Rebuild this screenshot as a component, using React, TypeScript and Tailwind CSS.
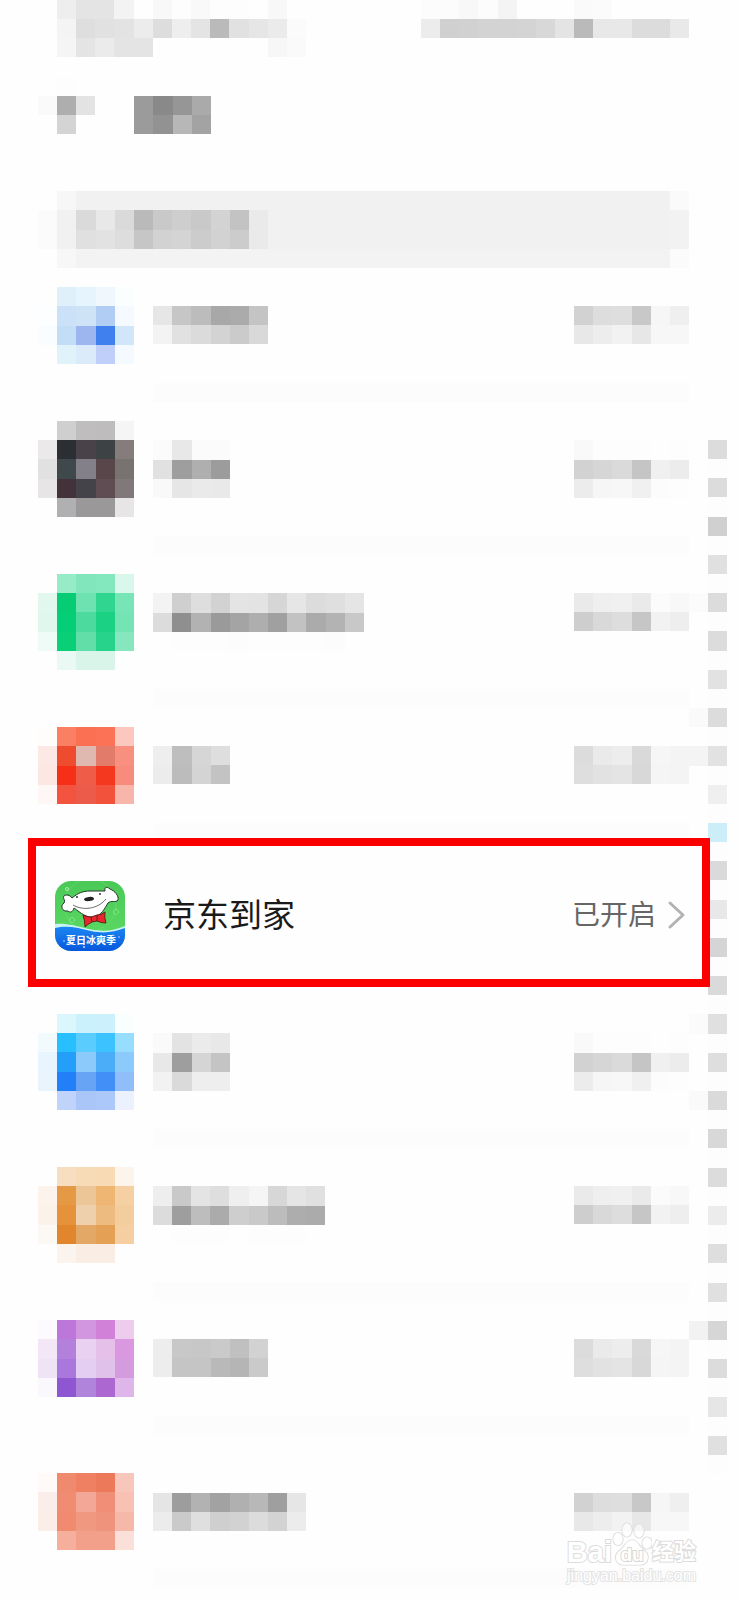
interface AppRow {
  icon: string[];
  label: string[];
  status: string[];
}

// Cell codes: "." is empty, two digits are a grey level, six digits are a full colour.
function toFill(code: string) {
  return code.length === 2 ? `#${code}${code}${code}` : `#${code}`;
}

const cellsToPx = (n: number) => Math.round((n * 134) / 7);

function Mosaic({ rows }: { rows: string[] }) {
  const grid = rows.map((r) => r.split(' '));
  const cols = Math.max(...grid.map((r) => r.length));

  return (
    <svg
      className="block shrink-0"
      width={cellsToPx(cols)}
      height={cellsToPx(rows.length)}
      viewBox={`0 0 ${cols} ${rows.length}`}
      preserveAspectRatio="none"
      shapeRendering="crispEdges"
      aria-hidden="true"
    >
      {grid.map((row, y) =>
        row.map((code, x) =>
          code === '.' ? null : <rect key={`${x}-${y}`} x={x} y={y} width={1} height={1} fill={toFill(code)} />
        )
      )}
    </svg>
  );
}

// The status text falls on the pixel grid in four different ways.
const STATUS_A = ['.', 'd2 dd de c8 f6 ef', 'e8 ed f2 e7 f7 f7'];
const STATUS_B = ['.', 'f9 fd fd fd . fd', 'd2 d6 da c5 f0 ec', 'ec f6 f7 f0 fc fd'];
const STATUS_C = ['.', 'ea ef f0 ea fb f8', 'ce d9 dd c6 f2 ee'];
const STATUS_D = ['.', 'dc ea ed d9 f6 f4', 'de e2 e4 d8 f5 f4'];

const ROWS_ABOVE: AppRow[] = [
  {
    icon: [
      '. dff0fa e6f4fd f0f8fe fbfeff',
      'fcfeff cae1f7 cfe3f7 b1cdf4 f4faff',
      'fafdff c4ddf6 9eb6f0 4080ee d2e6fa',
      '. e0f3fb dbebfa c0cff9 f4faff',
    ],
    label: ['.', 'e6 c6 bc a8 ab c4', 'f3 e1 db d3 cb d9'],
    status: STATUS_A,
  },
  {
    icon: [
      '. d0cfd0 bfbdbe bebcbd f5f5f5',
      'ebe9ea 2b2f33 494349 3d4344 857c7c',
      'e2e1e2 3f484a 83808a 58464b 787371',
      'e7e5e6 43323a 45434a 5f4d53 817979',
      '. b0afb1 9b9899 9b9899 e7e5e6',
    ],
    label: ['.', 'fb e8 fb fb', 'e1 9e af 9c', 'f9 e6 ea e9'],
    status: STATUS_B,
  },
  {
    icon: [
      '. 97ebc6 81e6bb 83e8be daf7eb',
      'e2f8ef 06cd74 6fe2b1 30d68f 78e5b6',
      'e0f7ed 04ce76 4cda9f 1bd284 75e4b4',
      'effbf7 09cf77 62dfa9 27d38a 86e7bf',
      '. ebf9f4 d9f5ea d9f5ea fdfefe',
    ],
    label: ['.', 'f3 cf de d2 e4 e3 d6 e6 dc df e5', 'dc 8f b2 9a a4 ae a0 c2 ab b3 c8', 'fe fd fd fd fc fd fd fd fd fc'],
    status: STATUS_C,
  },
  {
    icon: [
      'fffdfc fb7f63 fb6f53 fb7257 fcc7be',
      'fce8e4 ef4c2f dfb8b0 e37b6b f98f7f',
      'fce7e2 f53016 ef5d48 f3381f f88c7c',
      'fef7f5 f2543f ec5b4a f2523c f8b5aa',
    ],
    label: ['.', 'ee be d6 de', 'ec bc d4 c3'],
    status: STATUS_D,
  },
];

const ROWS_BELOW: AppRow[] = [
  {
    icon: [
      '. dcf6fd cbf1fc ccf1fc f9fefe',
      'f2fafe 28bffe 5acdfe 3cc3ff 97ddfe',
      'e9f5fe 249ff9 8bcafa 4bacf8 8dcafc',
      'eaf4fd 217ff7 68a4f6 428ff7 92bdfb',
      '. bfd3fb aac6f9 acc7f9 ebf2fe',
    ],
    label: ['.', 'fa e3 eb e8', 'e8 9e d5 c4', 'f2 da ee ee'],
    status: STATUS_B,
  },
  {
    icon: [
      '. f7dec0 f7dbb6 f8dab4 fdf5ec',
      'fbf3ec e59945 edc697 efb673 f4d0a2',
      'fbf2ea e5923b efd0ac edbb80 f4cd9e',
      'fcf9f4 e2862e e3a766 e4a055 f5cfa2',
      '. fbf4ee faeee4 faeee4 fefefe',
    ],
    label: ['.', 'ee c9 e4 de ef f5 d7 e5 e0', 'dc 9e bd ab ce c9 bc ad ab fe', '. fd fd fd fe fd fd fd'],
    status: STATUS_C,
  },
  {
    icon: [
      'fdfaff bd76da d196df d182d8 eeccee',
      'f2e6f7 b380dc e9d2f1 e5c0e9 d998df',
      'eee4f6 aa77dc e4cef1 dfc1ea d59bdf',
      'faf8fd 8f56d2 b084db ac67d1 deb6e9',
    ],
    label: ['.', 'ed c8 c7 ca c0 d2', 'ed c5 c5 b9 b5 ca'],
    status: STATUS_D,
  },
  {
    icon: [
      '. . . . .',
      'fffaf8 f08a6f ef8062 ed795b f8c7bb',
      'fbede9 f08c72 f3a897 f08e77 f8c1b3',
      'fbeee9 f08b70 f19880 f0937c f6b8a9',
      '. f6ae9d f3a08a f3a08a fbe0da',
    ],
    label: ['.', '.', 'e5 9d b2 a2 b0 b8 9f e6', 'ec ca df cf d2 dc d3 ec'],
    status: ['.', ...STATUS_A],
  },
];

// Letter index on the right: one lit cell for every other row.
const INDEX_LETTERS = [
  '. dc', '. dc', '. d0', '. e0', 'fb dc', '. dc', '. e2', 'fa dc', 'f4 e2', '. ef', '. cbeef9', '. da', '. e8', '. d5',
  '. da', 'fb e0', '. de', 'fa da', '. d8', '. dc', '. ec', '. de', '. e0', 'f2 d6', '. dc', '. e6', '. e0',
];
const INDEX_ROWS = INDEX_LETTERS.flatMap((row) => [row, '. fd']);

function PixelRow({ row }: { row: AppRow }) {
  return (
    <li>
      <button type="button" aria-label="应用" className="flex w-full items-start pt-[19px] pb-[19px] pl-[38px]">
        <Mosaic rows={row.icon} />
        <span className="ml-[19px] flex flex-1 items-start justify-between">
          <Mosaic rows={row.label} />
          <Mosaic rows={row.status} />
        </span>
      </button>
      <div className="ml-[153px] h-[19px] bg-[#fcfcfc]" />
    </li>
  );
}

function JdIcon() {
  return (
    <svg className="size-[70px] shrink-0" viewBox="0 0 70 70" aria-hidden="true">
      <defs>
        <clipPath id="jd-clip">
          <rect width="70" height="70" rx="16" />
        </clipPath>
        <linearGradient id="jd-green" x1="0" y1="0" x2="0" y2="1">
          <stop offset="0" stopColor="#4bc957" />
          <stop offset="1" stopColor="#5fdc66" />
        </linearGradient>
        <linearGradient id="jd-blue" x1="0" y1="0" x2="0" y2="1">
          <stop offset="0" stopColor="#1c86f2" />
          <stop offset="1" stopColor="#0757dc" />
        </linearGradient>
      </defs>
      <g clipPath="url(#jd-clip)">
        <rect width="70" height="70" fill="url(#jd-green)" />
        <circle cx="35" cy="24" r="26" fill="none" stroke="#7be67f" strokeWidth="1" opacity="0.4" />
        <g fill="none" stroke="#a9f0a9" strokeWidth="1">
          <circle cx="12" cy="8" r="1.5" />
          <circle cx="17" cy="39" r="2.5" strokeDasharray="1 1" />
          <circle cx="61" cy="31" r="2.5" strokeDasharray="1 1" />
        </g>
        <path d="M0 43 C12 42 20 45 34 48 S58 50 70 45 V70 H0Z" fill="#c9f3f3" />
        <path d="M0 47 C13 44 23 47 36 50 S59 51 70 47 V70 H0Z" fill="url(#jd-blue)" />
        {/* dog head with both ears */}
        <path
          d="M17 17 C23 12 28 10 35 10 C41 10 45 10 50 10 C49 6 52 5 55 8 C60 10 64 15 63 19 C61 22 56 19 53 22 C50 27 46 35 39 36 C31 37 26 32 19 27 C18 31 15 32 13 30 C7 31 5 25 9 22 C11 19 7 17 9 15 C11 13 15 14 17 17Z"
          fill="#fff"
          stroke="#26352a"
          strokeWidth="1"
        />
        <path d="M18 24 C28 30 43 28 51 18" fill="none" stroke="#444" strokeWidth="0.8" />
        <ellipse cx="34" cy="18" rx="5" ry="2" fill="#222" transform="rotate(-7 34 18)" />
        <circle cx="22" cy="16" r="0.9" fill="#222" />
        <circle cx="45" cy="13" r="0.9" fill="#222" />
        {/* bow tie */}
        <path
          d="M28 34 Q32 36 36 36 L42 34 Q46 34 50 31 Q49 36 51 42 Q46 42 42 40 L37 41 Q33 43 30 46 Q30 40 28 34Z"
          fill="#e8262b"
          stroke="#5a1a18"
          strokeWidth="0.9"
        />
        <path d="M36 36 L37 41 M42 34 V40" stroke="#5a1a18" strokeWidth="0.9" />
        <text
          x="36"
          y="63"
          textAnchor="middle"
          fontSize="10"
          fontWeight="700"
          fill="#fff"
          fontFamily='"Noto Sans CJK SC", sans-serif'
        >
          夏日冰爽季
        </text>
        <g fill="#bfe2ff">
          <circle cx="9" cy="60" r="0.8" />
          <circle cx="64" cy="56" r="0.8" />
          <circle cx="29" cy="66" r="1" />
        </g>
      </g>
    </svg>
  );
}

function HighlightedRow() {
  return (
    <li className="relative z-10 -mt-1 -mr-[21px] mb-2 ml-7">
      <button
        type="button"
        className="flex w-full items-center border-8 border-[#fc0000] bg-[#fefefe] pt-[35px] pr-4 pb-7 pl-[19px]"
      >
        <JdIcon />
        <span className="ml-[38px] text-[33px] leading-10 text-[#1a1a1a]">京东到家</span>
        <span className="ml-auto text-[28px] leading-10 text-[#666]">已开启</span>
        <svg
          className="ml-[10px] h-8 w-5"
          viewBox="0 0 20 32"
          fill="none"
          stroke="#b2b2b2"
          strokeWidth="3"
          strokeLinecap="round"
          strokeLinejoin="round"
          aria-hidden="true"
        >
          <path d="M4 3 L17 15 L4 27" />
        </svg>
      </button>
    </li>
  );
}

function Watermark() {
  return (
    <div className="absolute right-[42px] bottom-[14px] z-20 flex flex-col items-end text-white">
      <div className="flex items-end [paint-order:stroke_fill] [-webkit-text-stroke:2px_#dcdcdc]">
        <span className="text-[29px] leading-7 font-bold">Bai</span>
        <svg className="h-11 w-10 shrink-0" viewBox="0 0 40 44" aria-hidden="true">
          <g fill="#fff" fillOpacity="0.6" stroke="#d8d8d8" strokeWidth="1.2">
            <ellipse cx="6" cy="17" rx="5" ry="6.5" />
            <ellipse cx="15" cy="8" rx="5" ry="7" />
            <ellipse cx="27" cy="9" rx="5" ry="7" />
            <ellipse cx="35" cy="21" rx="5" ry="6" />
            <path d="M20 18 C27 18 27 25 33 29 C38 33 37 42 29 43 C25 43 16 43 12 43 C3 43 1 34 7 29 C13 25 13 18 20 18Z" />
          </g>
          <text
            x="20"
            y="39"
            textAnchor="middle"
            fontSize="19"
            fontWeight="700"
            fill="#fff"
            stroke="#d8d8d8"
            strokeWidth="2"
            fontFamily='"Liberation Sans", sans-serif'
          >
            du
          </text>
        </svg>
        <span className="text-[22px] leading-7 font-bold">经验</span>
      </div>
      <span className="text-[16px] leading-5 [paint-order:stroke_fill] [-webkit-text-stroke:2px_#e4e4e4]">
        jingyan.baidu.com
      </span>
    </div>
  );
}

export default function App() {
  return (
    <div className="relative flex min-h-screen bg-[#fefefe] font-['Liberation_Sans','Noto_Sans_CJK_SC',sans-serif]">
      <main className="min-w-0 flex-1">
        <div className="flex justify-between pl-[57px]">
          <Mosaic
            rows={[
              'ee e4 e4 f3 . f8 fd f9 fd fd . f8',
              'f4 de e1 e3 ec dd ee e4 ba e1 e6 eb fb',
              'f5 e4 eb e4 e4 . . . . . . f7 fa',
            ]}
          />
          <Mosaic rows={['fc fc f8 fc f4 . . . fa fb', 'ec d0 d1 d3 d3 d4 d8 e4 ba e8 e8 dc dc e9']} />
        </div>

        <header className="flex pt-5 pl-[38px]">
          <button type="button" aria-label="返回">
            <Mosaic rows={['. fd', 'fa ae e3', 'fe d4']} />
          </button>
          <h1 className="ml-[39px] pt-[19px]" aria-label="应用列表">
            <Mosaic rows={['9b 89 96 aa', '9b 92 b7 a3']} />
          </h1>
        </header>

        <label className="mt-[57px] flex pl-[38px]">
          <Mosaic
            rows={[
              '. f7 f1 f1 f1 f1 f1 f1 f1 f1 f1 f1',
              'fb f1 da e8 da ba c9 ce c9 d3 c3 ea',
              'fb f1 e0 e2 dd c6 d2 d4 cc d2 cc ea',
              '. f7 f3 f3 f3 f3 f3 f3 f3 f3 f3 f3',
            ]}
          />
          <input
            type="search"
            aria-label="搜索应用"
            className="min-w-0 flex-1 appearance-none border-b-[19px] border-[#f3f3f3] bg-[#f1f1f1] outline-none"
          />
          <Mosaic rows={['fa', 'f2', 'f2', 'fb']} />
        </label>

        <ul>
          {ROWS_ABOVE.map((row, i) => (
            <PixelRow key={i} row={row} />
          ))}
          <HighlightedRow />
          {ROWS_BELOW.map((row, i) => (
            <PixelRow key={i} row={row} />
          ))}
        </ul>
      </main>

      <nav aria-label="字母索引" className="mr-[11px] pt-[440px]">
        <Mosaic rows={INDEX_ROWS} />
      </nav>

      <Watermark />
    </div>
  );
}
